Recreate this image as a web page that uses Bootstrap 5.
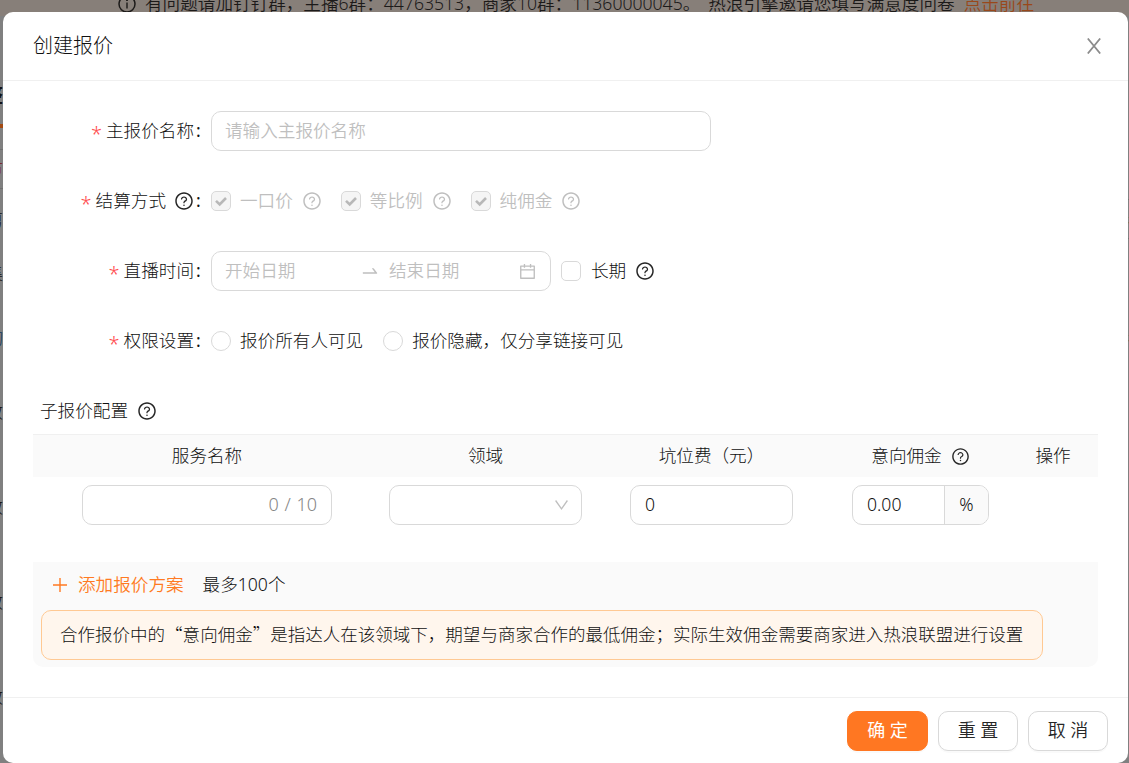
<!DOCTYPE html>
<html lang="zh-CN">
<head>
<meta charset="utf-8">
<meta name="viewport" content="width=device-width, initial-scale=1">
<title>创建报价</title>
<link rel="stylesheet" href="https://cdn.jsdelivr.net/npm/bootstrap@5.3.0/dist/css/bootstrap.min.css">
<style>
  body { font: 300 17.6px/27.5px "Noto Sans", "Noto Sans CJK SC", sans-serif; color: #101010; background: #808080; height: 763px; overflow: hidden; }
  .cjk { font-family: "Noto Sans CJK SC", sans-serif; }
  svg { fill: currentColor; flex: none; display: block; }
  .ico { width: 20px; height: 20px; }
  /* dimmed page behind the dialog */
  .notice { height: 25px; margin-top: -9px; padding-left: 117px; background: #877f79; color: #1c1a19; white-space: nowrap; font-weight: 350; }
  .notice span + span { margin-left: 8px; }
  .notice a { color: #99481b; text-decoration: none; margin-left: 9px; }
  .behind { position: absolute; top: 0; width: 20px; overflow: hidden; height: 763px; color: #111; line-height: 20px; }
  .behind span { position: absolute; right: 17px; white-space: nowrap; }
  .behind i { position: absolute; left: 0; width: 20px; height: 1px; background: #707070; }
  .behind-end { left: 1128px; width: 1px; }
  .behind-end span { right: auto; left: 0; }
  /* dialog */
  .dialog { position: absolute; left: 3px; top: 12px; width: 1125px; height: 751px; border: 0; border-radius: 10px; background: #fff; color: inherit; overflow: hidden; }
  .dialog-head { height: 69px; padding: 0 27px 0 30px; border-bottom: 1px solid #f0f0f0; font-size: 20px; }
  .x-close { color: #8c8c8c; }
  .form-rows { padding-top: 30px; gap: 30px; }
  .form-line { height: 40px; }
  .line-label { width: 208px; padding-right: 10px; }
  .line-label b { color: #ff4d4f; font: 350 20px/20px "Noto Sans", sans-serif; height: 15px; margin-right: 4px; }
  .line-label em { font-style: normal; margin-left: 2px; width: 5px; font-weight: 400; }
  .field { height: 40px; border: 1px solid #d9d9d9; border-radius: 10px; padding: 0 13px; background: #fff; }
  .hint { color: #bfbfbf; font-weight: 350; }
  .tick { width: 20px; height: 20px; border: 1px solid #d9d9d9; border-radius: 5px; margin-right: 9px; flex: none; }
  .tick.off { background: #f5f5f5; color: #b8b8b8; }
  .tick.dot { border-radius: 50%; }
  .opt { margin-right: 19px; }
  .opt .ms-2 { margin-left: 9px !important; }
  .sub-title { height: 28px; margin: 36px 0 9px; padding-left: 37px; }
  .sub-title .ms-2, .long-term { margin-left: 9px !important; }
  .line-label .ico, .sub-title .ico, .long-term, .grid-head svg { color: #262626; }
  .grid-cols { display: grid; grid-template-columns: 348px 209px 243px 175px 90px; width: 1065px; margin-left: 30px; align-items: center; justify-items: center; }
  .grid-head { height: 43px; background: #fafafa; border-top: 1px solid #f0f0f0; }
  .grid-row { height: 56px; }
  .count { color: #858585; word-spacing: 1px; font-weight: 350; font-size: 18px; padding-right: 14px; }
  .unit { width: 44px; margin-right: -13px; height: 38px; background: #fafafa; border-left: 1px solid #d9d9d9; border-radius: 0 9px 9px 0; }
  .extra { margin: 29px 30px 0; height: 105px; padding: 9px 8px 0; background: #fafafa; border-radius: 0 0 10px 10px; }
  .brand { color: #ff7a22; font-weight: 350; }
  .tip { width: 1002px; height: 50px; margin-top: 11px; padding: 0 0 2px 18px; border: 1px solid #ffc993; border-radius: 10px; background: #fff6ed; white-space: nowrap; font-size: 17.52px; }
  .dialog-foot { height: 66px; margin-top: auto; border-top: 1px solid #f0f0f0; padding-right: 20px; gap: 10px; }
  .act { --bs-btn-border-color: #d9d9d9; --bs-btn-bg: #fff; --bs-btn-color: #262626; --bs-btn-font-size: 18px; --bs-btn-padding-x: 0; --bs-btn-padding-y: 0; width: 80px; height: 40px; border-radius: 10px; font-weight: 350; box-shadow: 0 2px 0 rgba(0,0,0,.02); }
  .act-main { --bs-btn-bg: #ff7722; --bs-btn-border-color: #ff7722; --bs-btn-color: #fff; width: 81px; font-weight: 400; }
</style>
</head>
<body>
<svg class="d-none" xmlns="http://www.w3.org/2000/svg">
  <symbol id="help" viewBox="0 0 1024 1024"><path d="M512 64C264.6 64 64 264.6 64 512s200.6 448 448 448 448-200.6 448-448S759.4 64 512 64zm0 820c-205.4 0-372-166.6-372-372s166.6-372 372-372 372 166.6 372 372-166.6 372-372 372z"/><path d="M623.6 316.7C593.6 290.4 554 276 512 276s-81.6 14.5-111.6 40.7C369.2 344 352 380.7 352 420v7.6c0 4.4 3.6 8 8 8h48c4.4 0 8-3.6 8-8V420c0-44.1 43.1-80 96-80s96 35.9 96 80c0 31.1-22 59.6-56.1 72.7-21.2 8.1-39.2 22.3-52.1 40.9-13.1 19-19.9 41.8-19.9 64.9V620c0 4.4 3.6 8 8 8h48c4.4 0 8-3.6 8-8v-22.7a48.3 48.3 0 0130.9-44.8c59-22.7 97.1-74.7 97.1-132.5.1-39.3-17.1-76-48.3-103.3zM472 732a40 40 0 1080 0 40 40 0 10-80 0z"/></symbol>
  <symbol id="check" viewBox="0 0 18 18"><path d="M4 8.8l3.7 3.7L14 6" fill="none" stroke="currentColor" stroke-width="2.6"/></symbol>
</svg>

<div class="notice d-flex align-items-center">
  <svg class="ico me-2" viewBox="0 0 20 20"><circle cx="10" cy="10" r="8" fill="none" stroke="currentColor" stroke-width="1.5"/><path d="M9.3 8.6h1.4v6H9.3zM9.1 5.2h1.8V7H9.1z"/></svg>
  <span>有问题请加钉钉群，主播6群：44763513，商家10群：11360000045。</span><span>热浪引擎邀请您填写满意度问卷</span><a href="#">点击前往</a>
</div>
<div class="behind">
  <span class="fs-5 fw-bold" style="top:86px">整</span>
  <i style="top:124px;height:4px;background:#a34a12"></i><i style="top:149px"></i>
  <span style="top:158px;color:#7a1016">市</span><i style="top:188px"></i>
  <span style="top:209px">剪</span><span style="top:263px">集</span><span style="top:327px;color:#123a5c">询</span>
  <span style="top:401px">效</span><span style="top:496px">效</span><span style="top:591px">效</span><span style="top:686px">效</span>
</div>
<div class="behind behind-end">
  <i style="top:199px"></i><span style="top:209px">看</span><i style="top:238px"></i><span style="top:327px">看</span>
</div>

<main class="dialog d-flex flex-column">
  <header class="dialog-head d-flex align-items-center justify-content-between">
    <span>创建报价</span>
    <svg class="x-close" width="14" height="16" viewBox="0 0 14 16"><path d="M.8.5L13.2 15.5M13.2.5L.8 15.5" stroke="currentColor" stroke-width="1.8"/></svg>
  </header>

  <section class="form-rows d-flex flex-column">
    <div class="form-line d-flex align-items-center">
      <div class="line-label d-flex justify-content-end align-items-center"><b>*</b>主报价名称<em>:</em></div>
      <div class="field hint d-flex align-items-center" style="width:500px">请输入主报价名称</div>
    </div>
    <div class="form-line d-flex align-items-center">
      <div class="line-label d-flex justify-content-end align-items-center"><b>*</b>结算方式<svg class="ico ms-2"><use href="#help"/></svg><em>:</em></div>
      <div class="d-flex hint">
        <div class="opt d-flex align-items-center"><span class="tick off"><svg width="18" height="18"><use href="#check"/></svg></span>一口价<svg class="ico ms-2"><use href="#help"/></svg></div>
        <div class="opt d-flex align-items-center"><span class="tick off"><svg width="18" height="18"><use href="#check"/></svg></span>等比例<svg class="ico ms-2"><use href="#help"/></svg></div>
        <div class="opt d-flex align-items-center"><span class="tick off"><svg width="18" height="18"><use href="#check"/></svg></span>纯佣金<svg class="ico ms-2"><use href="#help"/></svg></div>
      </div>
    </div>
    <div class="form-line d-flex align-items-center">
      <div class="line-label d-flex justify-content-end align-items-center"><b>*</b>直播时间<em>:</em></div>
      <div class="field hint d-flex align-items-center" style="width:340px">
        <span style="width:135px">开始日期</span>
        <svg class="ico" style="margin-right:9px" viewBox="0 0 1024 1024"><path d="M873.1 596.2l-164-208A32 32 0 00684 376h-64.800c-6.700 0-10.400 7.700-6.300 13l144.300 183H152c-4.400 0-8 3.600-8 8v60c0 4.400 3.600 8 8 8h695.900c26.800 0 41.700-30.800 25.200-51.800z"/></svg>
        <span>结束日期</span>
        <svg class="ms-auto" width="19" height="19" viewBox="0 0 1024 1024"><path d="M880 184H712v-64c0-4.400-3.600-8-8-8h-56c-4.400 0-8 3.600-8 8v64H384v-64c0-4.400-3.600-8-8-8h-56c-4.400 0-8 3.600-8 8v64H144c-17.700 0-32 14.300-32 32v664c0 17.700 14.300 32 32 32h736c17.700 0 32-14.300 32-32V216c0-17.700-14.300-32-32-32zm-40 656H184V460h656v380zM184 392V256h128v48c0 4.400 3.600 8 8 8h56c4.400 0 8-3.600 8-8v-48h256v48c0 4.400 3.600 8 8 8h56c4.400 0 8-3.600 8-8v-48h128v136H184z"/></svg>
      </div>
      <span class="tick" style="margin-left:10px;margin-right:10px"></span>长期<svg class="ico long-term"><use href="#help"/></svg>
    </div>
    <div class="form-line d-flex align-items-center">
      <div class="line-label d-flex justify-content-end align-items-center"><b>*</b>权限设置<em>:</em></div>
      <div class="opt d-flex align-items-center" style="margin-right:20px"><span class="tick dot"></span>报价所有人可见</div>
      <div class="opt d-flex align-items-center"><span class="tick dot"></span>报价隐藏，仅分享链接可见</div>
    </div>
  </section>

  <div class="sub-title d-flex align-items-center">子报价配置<svg class="ico ms-2"><use href="#help"/></svg></div>
  <div class="grid-cols grid-head">
    <span>服务名称</span><span>领域</span><span>坑位费（元）</span>
    <span class="d-flex align-items-center">意向佣金<svg style="margin-left:9px" width="19" height="19"><use href="#help"/></svg></span>
    <span>操作</span>
  </div>
  <div class="grid-cols grid-row">
    <div class="field d-flex align-items-center justify-content-end count" style="width:250px">0 / 10</div>
    <div class="field d-flex align-items-center justify-content-end hint" style="width:193px"><svg width="13" height="10" viewBox="0 0 13 10"><path d="M.6.5l5.900 8.300L12.400.5" fill="none" stroke="currentColor" stroke-width="1.300"/></svg></div>
    <div class="field d-flex align-items-center" style="width:163px;padding-left:14px">0</div>
    <div class="field d-flex align-items-center justify-content-between" style="width:137px;padding-left:14px">0.00<span class="unit d-flex align-items-center justify-content-center">%</span></div>
  </div>

  <section class="extra">
    <div class="d-flex align-items-center">
      <svg class="brand" style="margin:0 11px 0 12px" width="14" height="14" viewBox="0 0 14 14"><path d="M0 7h14M7 0v14" stroke="currentColor" stroke-width="1.400"/></svg>
      <span class="brand">添加报价方案</span><span style="margin-left:19px">最多100个</span>
    </div>
    <div class="tip cjk d-flex align-items-center">合作报价中的“意向佣金”是指达人在该领域下，期望与商家合作的最低佣金；实际生效佣金需要商家进入热浪联盟进行设置</div>
  </section>

  <footer class="dialog-foot d-flex align-items-center justify-content-end">
    <button class="btn act act-main">确 定</button>
    <button class="btn act">重 置</button>
    <button class="btn act">取 消</button>
  </footer>
</main>
<script src="https://cdn.jsdelivr.net/npm/bootstrap@5.3.0/dist/js/bootstrap.bundle.min.js"></script>
</body>
</html>
